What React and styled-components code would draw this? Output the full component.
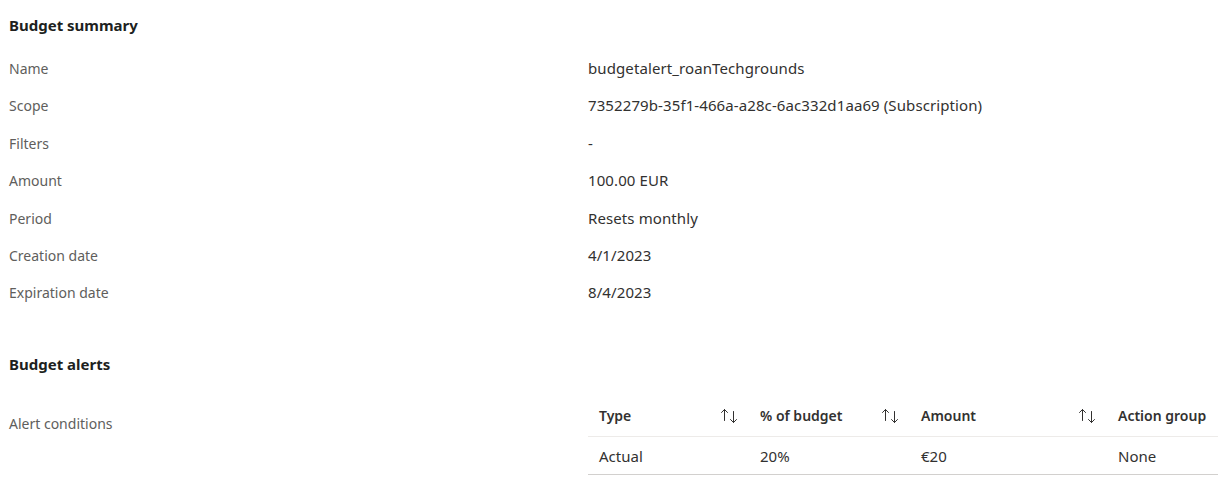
import React from "react";
import styled, { createGlobalStyle } from "styled-components";

const Global = createGlobalStyle`
  html, body { margin: 0; padding: 0; background: #fff; }
  body { font-family: "Segoe UI", "Noto Sans", "Open Sans", sans-serif; font-size: 14px; color: #323130; }
`;

const Page = styled.div`
  width: 1218px;
  height: 491px;
  overflow: hidden;
  padding: 15px 0 0 9px;
  box-sizing: border-box;
`;

const Heading = styled.h2`
  margin: 0;
  font-size: 15px;
  font-weight: 700;
  line-height: 20px;
  color: #201f1e;
`;

const Props = styled.div`
  display: grid;
  grid-template-columns: 579px 1fr;
  margin-top: 24px;
  row-gap: 17.4px;
`;

const Label = styled.div`
  font-size: 14px;
  line-height: 20px;
  color: #605e5c;
`;

const Value = styled.div`
  font-size: 15px;
  letter-spacing: 0.1px;
  line-height: 18px;
  padding-bottom: 2px;
  color: #323130;
`;

const AlertsHeading = styled(Heading)`
  margin-top: 51px;
`;

const AlertSection = styled.div`
  display: grid;
  grid-template-columns: 579px 1fr;
  margin-top: 22px;
`;

const AlertLabel = styled(Label)`
  padding-top: 18px;
`;

const Table = styled.div`
  width: 640px;
`;

const Row = styled.div`
  display: grid;
  grid-template-columns: 161px 161px 197px 1fr;
  height: ${(p) => (p.$header ? 40 : 37)}px;
  align-items: center;
  border-bottom: 1px solid ${(p) => (p.$header ? "#edebe9" : "#d2d0ce")};
`;

const Cell = styled.div`
  display: flex;
  align-items: center;
  justify-content: space-between;
  padding: 0 10px 0 11px;
  line-height: 20px;
  white-space: nowrap;
  font-size: ${(p) => (p.$header ? 14 : 15)}px;
  font-weight: ${(p) => (p.$header ? 600 : 400)};
  color: #323130;
`;

const SortIcon = () => (
  <svg width="19" height="16" viewBox="0 0 19 16" fill="none" stroke="#323130" strokeWidth="1" strokeLinecap="round" strokeLinejoin="round">
    <path d="M4.5 1.5v11M1.5 4.5l3-3 3 3" />
    <path d="M13.5 3.5v11M10.5 11.5l3 3 3-3" />
  </svg>
);

const rows = [
  ["Name", "budgetalert_roanTechgrounds"],
  ["Scope", "7352279b-35f1-466a-a28c-6ac332d1aa69 (Subscription)"],
  ["Filters", "-"],
  ["Amount", "100.00 EUR"],
  ["Period", "Resets monthly"],
  ["Creation date", "4/1/2023"],
  ["Expiration date", "8/4/2023"],
];

export default function App() {
  return (
    <>
      <Global />
      <Page>
        <Heading>Budget summary</Heading>
        <Props>
          {rows.map(([k, v]) => (
            <React.Fragment key={k}>
              <Label>{k}</Label>
              <Value>{v}</Value>
            </React.Fragment>
          ))}
        </Props>
        <AlertsHeading>Budget alerts</AlertsHeading>
        <AlertSection>
          <AlertLabel>Alert conditions</AlertLabel>
          <Table>
            <Row $header>
              <Cell $header>Type<SortIcon /></Cell>
              <Cell $header>% of budget<SortIcon /></Cell>
              <Cell $header>Amount<SortIcon /></Cell>
              <Cell $header>Action group</Cell>
            </Row>
            <Row>
              <Cell>Actual</Cell>
              <Cell>20%</Cell>
              <Cell>€20</Cell>
              <Cell>None</Cell>
            </Row>
          </Table>
        </AlertSection>
      </Page>
    </>
  );
}
